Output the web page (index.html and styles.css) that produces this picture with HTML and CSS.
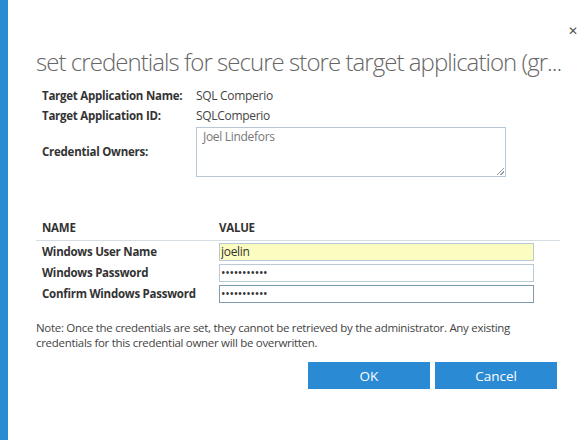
FILE: index.html
```html
<!DOCTYPE html>
<html>
<head>
<meta charset="utf-8">
<link rel="stylesheet" href="styles.css">
</head>
<body>
<div class="page">
  <div class="bar"></div>
  <div class="dialog">
    <span class="close">&#x2715;</span>
    <h1 class="title">set credentials for secure store target application (gr...</h1>
    <div class="info">
      <div class="lbl">Target Application Name:</div>
      <div class="val">SQL Comperio</div>
      <div class="lbl">Target Application ID:</div>
      <div class="val">SQLComperio</div>
      <div class="lbl owners">Credential Owners:</div>
      <div class="val"><div class="textarea">Joel Lindefors<span class="grip"></span></div></div>
    </div>
    <div class="creds">
      <div class="head">
        <div class="hname">NAME</div>
        <div class="hval">VALUE</div>
      </div>
      <div class="row">
        <div class="rlbl">Windows User Name</div>
        <input class="field filled" type="text" value="joelin">
      </div>
      <div class="row">
        <div class="rlbl">Windows Password</div>
        <input class="field" type="password" value="xxxxxxxxxxx">
      </div>
      <div class="row">
        <div class="rlbl">Confirm Windows Password</div>
        <input class="field focus" type="password" value="xxxxxxxxxxx">
      </div>
    </div>
    <p class="note">Note: Once the credentials are set, they cannot be retrieved by the administrator. Any existing credentials for this credential owner will be overwritten.</p>
    <div class="buttons">
      <button class="btn">OK</button>
      <button class="btn">Cancel</button>
    </div>
  </div>
</div>
</body>
</html>
```
FILE: styles.css
```css
html, body {
  margin: 0;
  padding: 0;
  background: #fff;
}
.page {
  display: flex;
  width: 588px;
  height: 440px;
  overflow: hidden;
  font-family: "Open Sans", "Noto Sans", sans-serif;
  color: #444;
}
.bar {
  width: 8px;
  background: #2a8dd4;
  flex: none;
}
.dialog {
  flex: 1;
  min-width: 0;
  position: relative;
  padding: 0 28px 0 28px;
}
.close {
  position: absolute;
  right: 10px;
  top: 24px;
  font-size: 12px;
  color: #555;
  font-family: "DejaVu Sans", sans-serif;
}
.title {
  margin: 47px 0 0 0;
  font-size: 24px;
  font-weight: 300;
  line-height: 30px;
  color: #666;
  white-space: nowrap;
  letter-spacing: -0.95px;
}
.info {
  display: grid;
  grid-template-columns: 154px 310px;
  margin: 9px 0 0 6px;
  row-gap: 0;
  font-size: 12px;
  letter-spacing: -0.3px;
}
.lbl {
  font-weight: 700;
  color: #333;
  line-height: 20px;
  font-size: 11.5px;
  letter-spacing: -0.25px;
}
.val {
  line-height: 20px;
  color: #444;
}
.owners {
  align-self: center;
}
.textarea {
  position: relative;
  box-sizing: border-box;
  height: 50px;
  margin-top: 1px;
  border: 1px solid #b8c7d6;
  padding: 0 6px;
  line-height: 18px;
  color: #777;
}
.grip {
  position: absolute;
  right: 1px;
  bottom: 1px;
  width: 7px;
  height: 7px;
  background: linear-gradient(135deg, transparent 45%, #999 45%, #999 55%, transparent 55%, transparent 70%, #999 70%, #999 80%, transparent 80%);
}
.creds {
  margin-top: 43px;
}
.head {
  display: flex;
  font-weight: 700;
  font-size: 11.5px;
  letter-spacing: -0.25px;
  color: #333;
  padding: 0 0 4px 6px;
  border-bottom: 1px solid #d5dde3;
  line-height: 16px;
}
.hname {
  width: 177px;
}
.row {
  display: flex;
  align-items: center;
  padding-left: 6px;
  height: 21px;
}
.rlbl {
  width: 177px;
  font-weight: 700;
  font-size: 11.5px;
  letter-spacing: -0.25px;
  color: #333;
}
.field {
  box-sizing: border-box;
  width: 315px;
  height: 18px;
  border: 1px solid #b9c9d6;
  padding: 0 1px;
  margin: 0;
  font-family: "Open Sans", sans-serif;
  font-size: 12px;
  letter-spacing: -0.3px;
  color: #333;
  background: #fff;
  outline: none;
}
.filled {
  background: #fbfdc0;
}
.focus {
  border-color: #7d9aae;
}
.note {
  margin: 16px 0 0 0;
  font-size: 11.5px;
  line-height: 15px;
  letter-spacing: -0.3px;
  color: #444;
}
.buttons {
  display: flex;
  justify-content: flex-end;
  gap: 5px;
  margin: 12px 3px 0 0;
}
.btn {
  width: 122px;
  height: 27px;
  border: none;
  background: #2a8ad4;
  color: #fff;
  font-family: "Open Sans", sans-serif;
  font-size: 13.5px;
  padding: 0;
}
```
